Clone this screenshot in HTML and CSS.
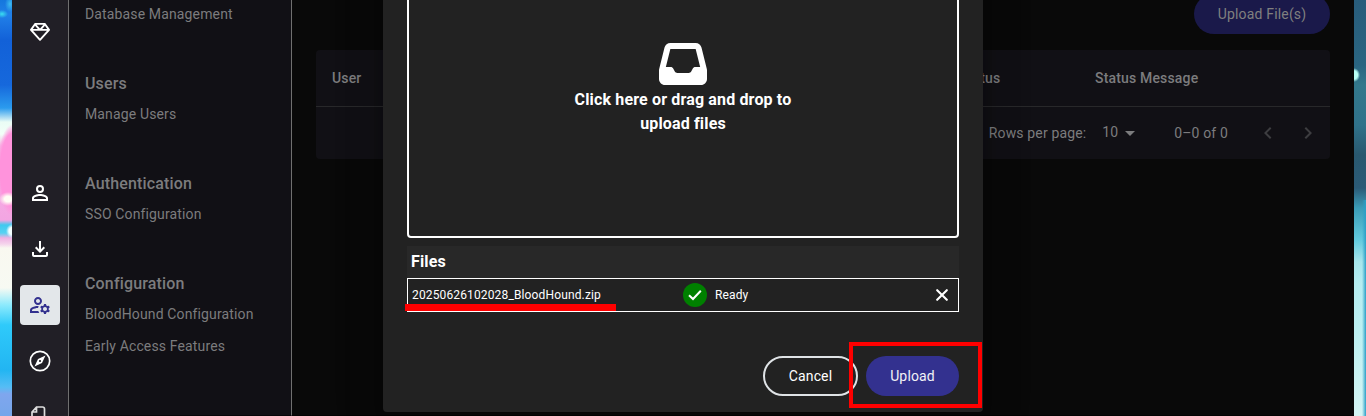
FILE: index.html
```html
<!DOCTYPE html>
<html lang="en">
<head>
<meta charset="utf-8">
<title>File Ingest</title>
<link rel="stylesheet" href="styles.css">
</head>
<body>
<div class="desktop">
  <div class="wall wall-left"></div>
  <nav class="rail">
    <a class="rail-item gem"><svg width="20" height="20" viewBox="0 0 512 512"><path d="M168.500 72L256 165l87.500-93h-175zM383.900 99.100L311.500 176h129L383.900 99.100zm50 124.900H256 78.100L256 420.300 433.900 224zM71.500 176h129L128.100 99.100 71.500 176zm434.300 40.100l-232 256c-4.500 5-11 7.900-17.800 7.900s-13.200-2.900-17.800-7.900l-232-256c-7.700-8.500-8.300-21.200-1.500-30.400l112-152c4.500-6.100 11.700-9.800 19.300-9.800H376c7.600 0 14.800 3.600 19.300 9.800l112 152c6.800 9.200 6.100 21.900-1.500 30.400z"/></svg></a>
    <a class="rail-item"><svg width="24" height="24" viewBox="0 0 24 24"><path d="M12 4a4 4 0 1 1 0 8a4 4 0 0 1 0-8zm0 2a2 2 0 1 0 0 4a2 2 0 0 0 0-4zm0 7c2.670 0 8 1.330 8 4v3H4v-3c0-2.670 5.330-4 8-4zm0 2c-2.700 0-5.800 1.290-6 2.010V18h12v-1c-.2-.71-3.300-2-6-2z"/></svg></a>
    <a class="rail-item"><svg width="24" height="24" viewBox="0 0 24 24"><path d="M18 15v3H6v-3H4v3c0 1.100.9 2 2 2h12c1.100 0 2-.9 2-2v-3h-2zm-1-4-1.410-1.410L13 12.170V4h-2v8.170L8.410 9.590 7 11l5 5 5-5z"/></svg></a>
    <a class="rail-item active"><svg width="24" height="24" viewBox="0 0 24 24"><path d="M4 18v-.65c0-.34.16-.66.41-.81C6.100 15.530 8.030 15 10 15c.03 0 .05 0 .08.01.1-.7.3-1.370.59-1.980-.22-.02-.44-.03-.67-.03-2.420 0-4.680.67-6.610 1.820-.88.52-1.390 1.500-1.390 2.530V20h9.260c-.42-.6-.75-1.280-.97-2H4zM10 12c2.210 0 4-1.790 4-4s-1.790-4-4-4-4 1.790-4 4 1.790 4 4 4zm0-6c1.100 0 2 .9 2 2s-.9 2-2 2-2-.9-2-2 .9-2 2-2zM20.750 16c0-.22-.03-.42-.06-.63l1.140-1.010-1-1.730-1.450.49c-.32-.27-.68-.48-1.080-.63L18 11h-2l-.3 1.490c-.4.15-.76.36-1.080.63l-1.450-.49-1 1.730 1.140 1.010c-.03.21-.06.41-.06.63s.03.42.06.63l-1.140 1.010 1 1.730 1.450-.49c.32.27.68.48 1.080.63L16 21h2l.3-1.490c.4-.15.76-.36 1.080-.63l1.450.49 1-1.730-1.140-1.010c.03-.21.06-.41.06-.63zM17 18c-1.100 0-2-.9-2-2s.9-2 2-2 2 .9 2 2-.9 2-2 2z"/></svg></a>
    <a class="rail-item"><svg width="24" height="24" viewBox="0 0 24 24"><circle cx="12" cy="12" r="9.700" fill="none" stroke="#fff" stroke-width="1.700"/><path fill-rule="evenodd" d="M17.500 6.500 14 14 6.500 17.500 10 10zM12 10.900a1.100 1.100 0 1 0 0 2.200a1.100 1.100 0 0 0 0-2.200z"/></svg></a>
    <a class="rail-item"><svg width="24" height="24" viewBox="0 0 24 24"><path fill="none" stroke="#ddd" stroke-width="1.700" d="M8.500 2H14.500a2 2 0 0 1 2 2V20a2 2 0 0 1-2 2H6a2 2 0 0 1-2-2V7zM8.500 2V7H4"/></svg></a>
  </nav>
  <aside class="menu">
    <section class="group"><p>Database Management</p></section>
    <section class="group"><h2>Users</h2><p>Manage Users</p></section>
    <section class="group"><h2>Authentication</h2><p>SSO Configuration</p></section>
    <section class="group"><h2>Configuration</h2><p>BloodHound Configuration</p><p>Early Access Features</p></section>
  </aside>
  <main class="content">
    <div class="toolbar"><button class="ingest">Upload File(s)</button></div>
    <div class="table">
      <div class="head"><span class="c-user">User</span><span class="c-status">Status</span><span class="c-msg">Status Message</span></div>
      <div class="pager">
        <span>Rows per page:</span>
        <span class="size">10</span>
        <svg class="caret" width="10" height="5" viewBox="0 0 10 5"><path d="M0 0h10L5 5z"/></svg>
        <span class="range">0–0 of 0</span>
        <svg class="prev" width="24" height="24" viewBox="0 0 24 24"><path d="M15.410 7.410 14 6l-6 6 6 6 1.410-1.410L10.830 12z"/></svg>
        <svg class="next" width="24" height="24" viewBox="0 0 24 24"><path d="M10 6 8.590 7.410 13.170 12l-4.580 4.590L10 18l6-6z"/></svg>
      </div>
    </div>
  </main>
  <div class="wall wall-right"></div>

  <div class="dialog">
    <div class="drop">
      <svg width="48" height="48" viewBox="0 0 512 512"><path d="M121 32C91.600 32 66 52 58.900 80.500L1.900 308.400C.6 313.500 0 318.700 0 323.900V416c0 35.300 28.700 64 64 64H448c35.300 0 64-28.700 64-64V323.900c0-5.200-.6-10.400-1.900-15.500l-57-227.900C446 52 420.400 32 391 32H121zm0 64H391l48 192H387.800c-12.100 0-23.200 6.800-28.600 17.700l-14.300 28.600c-5.400 10.800-16.500 17.700-28.600 17.700H195.800c-12.100 0-23.200-6.800-28.600-17.700l-14.300-28.600c-5.400-10.800-16.500-17.700-28.600-17.700H73L121 96z"/></svg>
      <div class="hint">Click here or drag and drop to<br>upload files</div>
    </div>
    <div class="files-title">Files</div>
    <div class="file">
      <span class="name">20250626102028_BloodHound.zip</span>
      <span class="ok"><svg width="24" height="24" viewBox="0 0 24 24"><path d="M6 12.200 10 16 17.800 7.800" fill="none" stroke="#fff" stroke-width="2"/></svg></span>
      <span class="state">Ready</span>
      <svg class="remove" width="12" height="12" viewBox="0 0 12 12"><path d="M1.200 1.200 10.800 10.800M10.800 1.200 1.200 10.800" stroke="#fff" stroke-width="2.100" stroke-linecap="round"/></svg>
      <div class="underline"></div>
    </div>
    <div class="actions">
      <button class="cancel">Cancel</button>
      <div class="upload-wrap"><button class="upload">Upload</button><div class="highlight"></div></div>
    </div>
  </div>
</div>
</body>
</html>
```

FILE: styles.css
```css
* { box-sizing: border-box; margin: 0; padding: 0; }
body { font-family: Roboto, "Liberation Sans", sans-serif; background: #090909; overflow: hidden; }
svg { display: block; fill: currentColor; flex: none; }
button { font: inherit; border: 0; border-radius: 20px; height: 40px; }
.desktop { position: relative; display: flex; width: 1366px; height: 416px; overflow: hidden; }

.wall { width: 12px; flex: none; }
.wall-left {
  background:
    radial-gradient(ellipse 6px 4px at 2px 14px, #39dff0, transparent),
    radial-gradient(ellipse 5px 8px at 10px 4px, #3dbbf0, transparent),
    radial-gradient(ellipse 9px 7px at 8px 199px, #fffdf5 40%, transparent),
    radial-gradient(ellipse 6px 7px at 12px 231px, #f4ffff 50%, transparent),
    radial-gradient(ellipse 16px 46px at 13px 170px, #ff93dc 80%, transparent),
    linear-gradient(#1577dd 0, #2180e8 15px, #1261d8 40px, #1668dc 85px, #2b9bee 108px, #eafcf5 122px, #f2fff8 134px, #f8b4e6 146px, #f3a5e2 220px, #3fc9ef 225px, #58d2f2 233px, #f0b2e4 238px, #f5d4ec 244px, #f9f8f0 248px, #f7faf3 288px, #8ceafd 305px, #2fcafa 325px, #22b5f2 370px, #55bdf5 387px, #7fa6ee 394px, #75a6ea 416px);
}
.wall-right {
  background:
    radial-gradient(ellipse 6px 7px at 0 75px, #b8fff5 60%, transparent),
    linear-gradient(90deg, transparent 8px, #2a9fc7 12px) 0 200px / 12px 216px no-repeat,
    linear-gradient(#285c7b 0, #2a6581 65px, #33788c 85px, #30728a 125px, #29586f 155px, #2b5a76 188px, #3b9cb7 208px, #62cade 240px, #a7e6ec 262px, #b5edf1 284px, #bcf0f2 330px, #d5f5f4 416px);
}

.rail { width: 57px; flex: none; background: #211f26; border-right: 1px solid #707070; display: flex; flex-direction: column; align-items: center; gap: 16px; padding-top: 12px; }
.rail-item { width: 40px; height: 40px; flex: none; display: flex; align-items: center; justify-content: center; color: #fff; border-radius: 4px; }
.gem { margin-bottom: 105px; }
.rail-item.active { background: #e3e7ea; color: #33318f; }

.menu { width: 223px; flex: none; background: #111015; border-right: 1px solid #707070; border-bottom: 1px solid #08070a; color: #7c7c7e; padding: 0 16px; letter-spacing: .14px; }
.group { margin-bottom: 43px; }
.group h2 { font-size: 16px; font-weight: 500; line-height: 24px; padding-top: 1px; letter-spacing: .15px; }
.group p { font-size: 14px; line-height: 20px; padding: 8px 0 3px; height: 32px; }
.group:first-child { height: 28px; }
.group:first-child p { padding-top: 4px; }

.content { flex: 1; background: #090909; border-bottom: 1px solid #040404; padding: 0 24px; color: #7c7c7e; letter-spacing: .14px; }
.toolbar { display: flex; justify-content: flex-end; height: 50px; }
.ingest { width: 136px; margin-top: -6px; background: #1a194a; color: #80807f; font-size: 14px; letter-spacing: .18px; }
.table { height: 109px; background: #111015; border-radius: 4px; font-size: 14px; }
.head { display: flex; align-items: center; height: 57px; padding-left: 16px; border-bottom: 1px solid #28282a; font-weight: 500; letter-spacing: .17px; }
.c-user { width: 627px; }
.c-status { width: 136px; }
.pager { display: flex; align-items: center; justify-content: flex-end; height: 52px; padding-right: 10px; }
.size { margin: -2px 7px 0 16px; }
.range { margin: 0 28px 0 39px; }
.prev, .next { color: #3d3d40; }
.next { margin-left: 16px; }

.dialog { position: absolute; left: 383px; top: -60px; width: 600px; height: 472px; background: #222; border-radius: 4px; padding: 0 24px; color: #fff; box-shadow: 0 11px 15px -7px rgba(0,0,0,.2), 0 24px 38px 3px rgba(0,0,0,.14), 0 9px 46px 8px rgba(0,0,0,.12); }
.drop { height: 298px; border: 2px solid #fff; border-radius: 4px; display: flex; flex-direction: column; align-items: center; padding-top: 98px; }
.hint { font-size: 16px; font-weight: 700; line-height: 24px; text-align: center; letter-spacing: .15px; }
.files-title { margin-top: 8px; height: 32px; padding: 0 4px; background: #282828; font-size: 16px; font-weight: 700; line-height: 31px; letter-spacing: .15px; }
.file { position: relative; height: 34px; border: 1px solid #fff; display: flex; align-items: center; padding: 0 10px 0 4px; font-size: 12px; letter-spacing: .14px; }
.name { width: 271px; }
.ok { width: 24px; height: 24px; border-radius: 50%; background: #008000; }
.state { margin-left: 8px; flex: 1; }
.underline { position: absolute; left: -3px; top: 25px; width: 211px; height: 7px; background: #f00; }
.actions { display: flex; justify-content: flex-end; gap: 8px; margin-top: 44px; font-size: 14px; }
.cancel { width: 95px; background: transparent; border: 2px solid #dfe3e6; color: #fff; letter-spacing: .14px; }
.upload-wrap { position: relative; }
.upload { width: 93px; background: #33318f; color: #f2f2f6; display: block; letter-spacing: .14px; }
.highlight { position: absolute; left: -17px; top: -14px; width: 133px; height: 66px; border: 4px solid #f00; }
```
